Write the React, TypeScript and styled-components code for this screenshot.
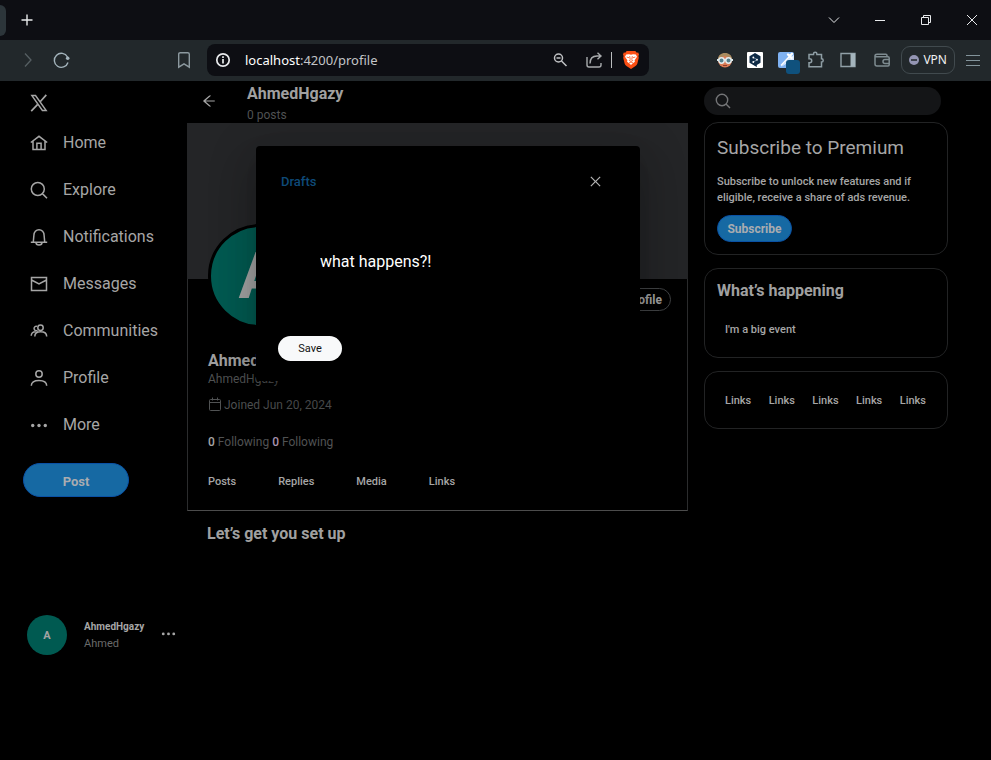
import React from "react";
import styled, { createGlobalStyle } from "styled-components";
import { AiOutlineArrowLeft, AiOutlineClose } from "react-icons/ai";

const GlobalStyle = createGlobalStyle`
  *, *::before, *::after { box-sizing: border-box; }
  html, body { margin: 0; background: #000; }
  body { font-family: Roboto, sans-serif; color: #a6a6a6; }
  button, input { font-family: inherit; margin: 0; }
  h1, h2, p, ul, dl, dd { margin: 0; padding: 0; }
  ul { list-style: none; }
  a { color: inherit; text-decoration: none; }
  svg { display: block; flex: none; overflow: visible; }
`;

const Shell = styled.div`
  display: flex;
  flex-direction: column;
  min-height: 100vh;
`;

/* Browser chrome */

const TabStrip = styled.div`
  display: flex;
  align-items: center;
  justify-content: space-between;
  height: 40px;
  background: #0d0e13;
`;

const TabStart = styled.div`
  display: flex;
  align-items: center;
  gap: 13px;
`;

const TabEdge = styled.div`
  width: 6px;
  height: 31px;
  border-radius: 0 6px 6px 0;
  background: #2c353a;
`;

const WindowControls = styled.div`
  display: flex;
  gap: 8px;
`;

const ChromeButton = styled.button<{ $w: number }>`
  display: flex;
  align-items: center;
  justify-content: center;
  width: ${(p) => p.$w}px;
  height: 32px;
  padding: 0;
  border: 0;
  background: none;
  color: #e8eaec;
`;

const Toolbar = styled.div`
  display: flex;
  align-items: center;
  justify-content: space-between;
  height: 41px;
  padding: 0 3px 1px 12px;
  background: #22282b;
`;

const ToolGroup = styled.div`
  display: flex;
  align-items: center;
`;

const Bookmark = styled(ChromeButton)`
  margin: 0 7px 0 88px;
`;

const AddressBar = styled.div`
  display: flex;
  align-items: center;
  width: 442px;
  height: 32px;
  padding: 0 0 0 8px;
  border-radius: 8px;
  background: #0d0e13;
`;

const Address = styled.div`
  flex: 1;
  padding-left: 14px;
  font: 13px/20px "Noto Sans", sans-serif;
  color: #c3c5c8;

  b {
    font-weight: 400;
    color: #fff;
  }
`;

const AddressRule = styled.div`
  width: 1px;
  height: 16px;
  background: #b9bcbe;
`;

const VpnButton = styled.button`
  display: flex;
  align-items: center;
  gap: 4px;
  height: 28px;
  margin: 0 3px 0 2px;
  padding: 0 7px;
  border: 1px solid #414a4e;
  border-radius: 9px;
  background: none;
  font: 12px/16px "Noto Sans", sans-serif;
  color: #f0f1f2;
`;

/* Page */

const Page = styled.div`
  position: relative;
  flex: 1;
  display: grid;
  grid-template-columns: 187px minmax(0, 1fr) 303px;
  align-items: start;
`;

const Sidebar = styled.nav`
  display: flex;
  flex-direction: column;
  padding: 12px 8px 0 23px;
`;

const Brand = styled.a`
  display: flex;
  height: 26px;
  padding: 1px 7px 0;
`;

const NavLink = styled.a`
  display: flex;
  align-items: center;
  gap: 15px;
  height: 47px;
  padding-left: 7px;
  font-size: 16px;
  line-height: 24px;
`;

const PrimaryButton = styled.button<{ $large?: boolean }>`
  align-self: flex-start;
  width: ${(p) => (p.$large ? 106 : 75)}px;
  height: ${(p) => (p.$large ? 34 : 27)}px;
  padding: 0;
  border: 1px solid #0a51a5;
  border-radius: 17px;
  background: #1669a3;
  font-size: ${(p) => (p.$large ? 13 : 12)}px;
  font-weight: 700;
  color: #a9acb0;
`;

const PostButton = styled(PrimaryButton)`
  margin-top: 15px;
  padding-top: 2px;
`;

const Account = styled.button`
  display: flex;
  align-items: center;
  margin-top: 118px;
  padding: 0 3px 0 4px;
  border: 0;
  background: none;
  text-align: left;
  color: #a6a6a6;
`;

const AccountMore = styled.span`
  padding-bottom: 4px;
`;

const Avatar = styled.span<{ $large?: boolean }>`
  display: flex;
  align-items: center;
  justify-content: center;
  width: ${(p) => (p.$large ? 104 : 40)}px;
  height: ${(p) => (p.$large ? 104 : 40)}px;
  border: ${(p) => (p.$large ? "3px solid #000" : "0")};
  border-radius: 50%;
  background: #005a51;
  font-size: ${(p) => (p.$large ? 64 : 11)}px;
  font-weight: 700;
  color: #a3a3a3;
`;

const AccountNames = styled.span`
  display: flex;
  flex-direction: column;
  flex: 1;
  padding-left: 17px;
  font-size: 11px;
  line-height: 17px;
  color: #6a6a6a;

  strong {
    font-size: 10px;
    color: #a6a6a6;
  }
`;

const Main = styled.main`
  display: flex;
  flex-direction: column;
`;

const ProfileBar = styled.header`
  display: flex;
  align-items: flex-start;
  gap: 30px;
  height: 42px;
  padding: 1px 0 0 14px;
`;

const BackButton = styled.button`
  margin-top: 11px;
  padding: 0;
  border: 0;
  background: none;
  color: #a6a6a6;
`;

const Title = styled.h1`
  font-size: 16px;
  line-height: 24px;
  color: #a0a0a0;
`;

const Muted = styled.p`
  font-size: 12px;
  line-height: 16px;
  color: #515354;
`;

const PostCount = styled(Muted)`
  margin-top: 1px;
`;

const ProfileCard = styled.section`
  border: solid #2b2c2d;
  border-width: 0 1px 1px;
  border-bottom-color: #4c4c4c;
  padding-bottom: 20px;
`;

const Banner = styled.div`
  height: 156px;
  margin: 0 -1px;
  background: #242527;
`;

const AvatarRow = styled.div`
  display: flex;
  align-items: flex-end;
  justify-content: space-between;
  height: 49px;
  padding: 0 16px 0 20px;
`;

const EditButton = styled.button`
  height: 23px;
  margin-bottom: 17px;
  padding: 0 8px;
  border: 1px solid #414345;
  border-radius: 12px;
  background: none;
  font-size: 12px;
  font-weight: 700;
  color: #a0a0a0;
`;

const Details = styled.div`
  padding: 23px 20px 0;
`;

const Name = styled.h2`
  font-size: 16px;
  line-height: 20px;
  color: #a0a0a0;
`;

const Joined = styled(Muted)`
  display: flex;
  align-items: center;
  gap: 3px;
  margin-top: 10px;
`;

const Follows = styled(Muted)`
  margin-top: 21px;

  b {
    font-weight: 500;
    color: #a6a6a6;
  }

  b.second {
    color: #a893ae;
  }
`;

const Tabs = styled.nav`
  display: flex;
  gap: 42px;
  margin-top: 24px;
  font-size: 11px;
  font-weight: 500;
  line-height: 16px;
`;

const Setup = styled.h2`
  padding: 11px 20px;
  font-size: 16px;
  line-height: 24px;
  color: #a0a0a0;
`;

const Aside = styled.aside`
  display: flex;
  flex-direction: column;
  padding: 6px 43px 0 16px;
`;

const Search = styled.label`
  display: flex;
  align-items: center;
  gap: 8px;
  height: 28px;
  margin-right: 7px;
  padding: 0 11px;
  border-radius: 14px;
  background: #141517;
  color: #747577;

  input {
    flex: 1;
    min-width: 0;
    border: 0;
    outline: 0;
    background: none;
    color: #a6a6a6;
  }
`;

const Card = styled.section`
  display: flex;
  flex-direction: column;
  margin-top: 13px;
  padding: 10px 12px 12px;
  border: 1px solid #222324;
  border-radius: 14px;

  ${Search} + & {
    margin-top: 7px;
  }
`;

const PremiumTitle = styled.h2`
  font-size: 19px;
  font-weight: 400;
  line-height: 30px;
`;

const CardTitle = styled.h2`
  font-size: 16px;
  line-height: 24px;
  color: #a0a0a0;
`;

const CardText = styled.p`
  margin: 11px 0 9px;
  font-size: 11px;
  font-weight: 500;
  line-height: 16px;
`;

const EventText = styled.p`
  padding: 19px 8px 7px;
  font-size: 11px;
  font-weight: 500;
  line-height: 16px;
`;

const LinkList = styled.ul`
  display: flex;
  justify-content: space-between;
  padding: 11px 9px 7px 8px;
  font-size: 11px;
  font-weight: 500;
  line-height: 16px;
`;

/* Dialog */

const Overlay = styled.div`
  position: absolute;
  inset: 0;
  display: flex;
  align-items: flex-start;
  justify-content: center;
  padding: 65px 95px 0 0;
`;

const Dialog = styled.form`
  display: flex;
  flex-direction: column;
  width: 384px;
  padding: 23px 22px 20px;
  border-radius: 4px;
  background: #000;
  box-shadow: 0 11px 15px -7px rgba(0, 0, 0, 0.2),
    0 24px 38px 3px rgba(0, 0, 0, 0.14), 0 9px 46px 8px rgba(0, 0, 0, 0.12);
`;

const DialogHead = styled.div`
  display: flex;
  align-items: center;
  justify-content: space-between;
  height: 24px;
  padding: 0 15px 0 3px;
`;

const PlainButton = styled.button`
  padding: 0;
  border: 0;
  background: none;
  font-size: 13px;
  font-weight: 500;
  color: #0e4a78;
`;

const CloseButton = styled(PlainButton)`
  color: #b4b4b4;
`;

const PostField = styled.textarea`
  height: 90px;
  margin: 53px 42px 0;
  padding: 2px 0 0;
  border: 0;
  outline: 0;
  resize: none;
  background: none;
  font: 16px/28px Roboto, sans-serif;
  color: #fff;
`;

const SaveButton = styled.button`
  align-self: flex-start;
  width: 64px;
  height: 25px;
  padding: 0;
  border: 0;
  border-radius: 13px;
  background: #f8f9fa;
  font-size: 11px;
  color: #111;
`;

const Stroke = ({
  size = 16,
  width = 1,
  color = "currentColor",
  children,
}: {
  size?: number;
  width?: number;
  color?: string;
  children: React.ReactNode;
}) => (
  <svg
    width={size}
    height={size}
    viewBox={`0 0 ${size} ${size}`}
    fill="none"
    stroke={color}
    strokeWidth={width}
    aria-hidden="true"
  >
    {children}
  </svg>
);

const XLogo = () => (
  <svg width="18" height="18" viewBox="0 0 18 18" fill="none" stroke="#a6a6a6" strokeWidth="1.500" aria-hidden="true">
    <path d="M1.900 1.600h3.600l10.600 14.800h-3.700z" />
    <path d="M16.300.9 10.200 7.800M7.700 10.400 1.200 17.200" strokeWidth="1.700" />
  </svg>
);

const BraveLogo = () => (
  <svg width="16" height="18" viewBox="0 0 16 18" aria-hidden="true">
    <path fill="#fb4f14" d="m3.700 0h8.600l1.500 1.700 1.400-.1.800 2-.6 1.500.4 1.600-1.500 6c-.3 1-1 1.800-1.800 2.400L8 18l-4.500-2.900c-.8-.6-1.500-1.400-1.800-2.400l-1.500-6 .4-1.600L0 3.600l.8-2 1.400.1z" />
    <path fill="#fff" d="M3.200 3.500 6 3.200l2 .5 2-.5 2.800.3 1.200 2.300-2.400 3.500.3 1.500-2.300 1.600L8 14l-1.600-1.600-2.300-1.600.3-1.500L2 5.800z" />
    <path fill="none" stroke="#fb4f14" strokeWidth=".8" d="m3.600 6 2.600.8M12.400 6l-2.600.8M6.700 5.100l.5 3.300-1 1.100L8 10.400l1.800-.9-1-1.100.5-3.300M6 12l2-1 2 1" />
  </svg>
);

const FaceIcon = () => (
  <svg width="16" height="16" viewBox="0 0 16 16" aria-hidden="true">
    <circle cx="8" cy="8.500" r="7" fill="#d97b55" />
    <path d="M1 8C1 3 4 1 8 1s7 2 7 7l-3-3-5-1-4 2z" fill="#a98c60" />
    <path d="M0 7h16v2H0z" fill="#d9e6e8" />
    <circle cx="4.500" cy="8.500" r="2.700" fill="#557f8b" stroke="#e5eef0" strokeWidth="1.400" />
    <circle cx="11.500" cy="8.500" r="2.700" fill="#557f8b" stroke="#e5eef0" strokeWidth="1.400" />
    <path d="M6 13.500h4" stroke="#8f3d2c" />
  </svg>
);

const HexIcon = () => (
  <svg width="16" height="16" viewBox="0 0 16 16" aria-hidden="true">
    <rect width="16" height="16" rx="1" fill="#fff" />
    <path d="m8 1 5.500 3.200v6.600L9.800 13v2L8 14l-5.500-3.200V4.200z" fill="#0f2b46" />
    <path d="m6.300 5.500 4 2.200-4 2.300" fill="none" stroke="#9fb1c4" strokeWidth=".7" />
    <circle cx="6.300" cy="5.500" r=".9" fill="#fff" />
    <circle cx="10" cy="7.700" r=".9" fill="#fff" />
    <circle cx="6.300" cy="10" r=".9" fill="#fff" />
  </svg>
);

const PickerIcon = () => (
  <svg width="16" height="16" viewBox="0 0 16 16" aria-hidden="true">
    <rect width="16" height="16" rx="2" fill="#7fb2f2" />
    <path d="M16 3v5l-5 2-8 5 8-9z" fill="#d6e8ff" />
    <path d="M3 13.500 11 5" stroke="#fff" strokeWidth="1.600" />
    <path d="m10 2.500 3.500 3.500M11.500 4.500l2.500-2.700" stroke="#fff" strokeWidth="2.400" strokeLinecap="round" />
    <rect x="8" y="8" width="14" height="14" rx="3" fill="#0f517d" />
  </svg>
);

const navItems = [
  {
    label: "Home",
    icon: <path d="M.8 8.500 9 2.300 17.200 8.500M3 7.300v8.300h12V7.300M6.900 15.500V9.300h4.200v6.200" />,
  },
  {
    label: "Explore",
    icon: <path d="M14.300 8a6.500 6.500 0 1 1-13 0 6.500 6.500 0 0 1 13 0zM12.400 12.600l4.600 4.600" />,
  },
  {
    label: "Notifications",
    icon: <path d="M.8 14.200h16.400M3.300 14l.6-6.700a5.100 5.600 0 0 1 10.200 0l.6 6.700M6 14.500a3 2.500 0 0 0 6 0" />,
  },
  {
    label: "Messages",
    icon: <path d="M1.500 2.500h15v13h-15zM1.500 5l7.500 4 7.500-4" />,
  },
  {
    label: "Communities",
    icon: (
      <path d="M13.200 5.700a2.700 2.700 0 1 1-5.400 0 2.700 2.700 0 0 1 5.400 0zM4.800 14.500q0-4.700 5.900-4.700t6 4.700M7.500 8.300a2.200 2.200 0 1 1-.5-3.900M1.200 13.700q.3-4 4.300-4" />
    ),
  },
  {
    label: "Profile",
    icon: <path d="M12.200 5a3.200 3.200 0 1 1-6.400 0 3.200 3.200 0 0 1 6.400 0zM1.300 16.800q0-5.300 7.700-5.300t7.700 5.300" />,
  },
];

const Dots = ({ size = 18 }: { size?: number }) => (
  <svg width={size} height={size} viewBox="0 0 18 18" fill="currentColor" aria-hidden="true">
    <circle cx="2.700" cy="9.500" r="1.700" />
    <circle cx="9" cy="9.500" r="1.700" />
    <circle cx="15.300" cy="9.500" r="1.700" />
  </svg>
);

const BrowserChrome = () => (
  <header>
    <TabStrip>
      <TabStart>
        <TabEdge />
        <ChromeButton $w={16} aria-label="New tab">
          <Stroke size={12}><path d="M6 .5v11M.5 6h11" strokeWidth="1.400" /></Stroke>
        </ChromeButton>
      </TabStart>
      <WindowControls>
        <ChromeButton $w={38} aria-label="Search tabs">
          <Stroke size={12}><path d="m1 3.500 5 5 5-5" /></Stroke>
        </ChromeButton>
        <ChromeButton $w={38} aria-label="Minimize">
          <Stroke size={10}><path d="M0 5.500h10" /></Stroke>
        </ChromeButton>
        <ChromeButton $w={38} aria-label="Restore">
          <Stroke size={10}><path d="M.5 2.500h7v7h-7zM2.500 2.500v-2h7v7h-2" /></Stroke>
        </ChromeButton>
        <ChromeButton $w={38} aria-label="Close window">
          <Stroke size={10}><path d="m0 0 10 10M10 0 0 10" /></Stroke>
        </ChromeButton>
      </WindowControls>
    </TabStrip>
    <Toolbar>
      <ToolGroup>
        <ChromeButton $w={32} aria-label="Forward">
          <Stroke color="#565f63" width={1.3}><path d="m5 1.500 6 6.500-6 6.500" /></Stroke>
        </ChromeButton>
        <ChromeButton $w={36} aria-label="Reload">
          <Stroke color="#a4b4bc" width={1.4}>
            <path d="M14 10.500A7 7 0 1 1 13.500 5" />
            <circle cx="13.700" cy="6.300" r="1.800" fill="#a4b4bc" stroke="none" />
          </Stroke>
        </ChromeButton>
        <Bookmark $w={32} aria-label="Bookmark">
          <Stroke color="#8c999f" width={1.4}><path d="M2.700 2.200q0-1.500 1.500-1.500h7.600q1.500 0 1.500 1.500v13L8 11.800l-5.300 3.400z" /></Stroke>
        </Bookmark>
        <AddressBar>
          <Stroke color="#e8eaec" width={1.7}>
            <circle cx="8" cy="8" r="6.200" />
            <path d="M8 7v4.500M8 4.300v1.600" />
          </Stroke>
          <Address><b>localhost</b>:4200/profile</Address>
          <ChromeButton $w={34} aria-label="Zoom">
            <Stroke size={14} color="#bfc1c3" width={1.5}>
              <circle cx="5.500" cy="5" r="4" />
              <path d="m8.500 8 5 5M3.500 5h4" />
            </Stroke>
          </ChromeButton>
          <ChromeButton $w={34} aria-label="Share">
            <Stroke color="#a8abad" width={1.4}>
              <path d="M1 5v8q0 2 2 2h10q2 0 2-2v-2M4 11.500c0-5 3-7.500 7-7.500h4M11.500.8 15 4l-3.500 3.300" />
            </Stroke>
          </ChromeButton>
          <AddressRule />
          <ChromeButton $w={37} aria-label="Brave Shields"><BraveLogo /></ChromeButton>
        </AddressBar>
      </ToolGroup>
      <ToolGroup>
        <ChromeButton $w={30} aria-label="Goggles extension"><FaceIcon /></ChromeButton>
        <ChromeButton $w={30} aria-label="Translator extension"><HexIcon /></ChromeButton>
        <ChromeButton $w={31} aria-label="Picker extension"><PickerIcon /></ChromeButton>
        <ChromeButton $w={30} aria-label="Extensions">
          <Stroke color="#8f9ea5" width={1.5}>
            <path d="M1 2.500h4.500V2a1.700 1.700 0 0 1 3.400 0v.5H13.500v4.200a1.700 1.700 0 0 1 0 3.400v4.600H1v-4h.7a2 2 0 0 0 0-4H1z" />
          </Stroke>
        </ChromeButton>
        <ChromeButton $w={33} aria-label="Side panel">
          <Stroke color="#91a0a7" width={1.4}>
            <path d="M1 1.500h14v13H1z" />
            <path d="M10.500 1.500H15v13h-4.500z" fill="#a4b4bc" stroke="none" />
          </Stroke>
        </ChromeButton>
        <ChromeButton $w={35} aria-label="Wallet">
          <Stroke color="#7e8b90" width={1.5}>
            <path d="M13 4.500V3.500q0-1.200-1.200-1.200H3Q1 2.300 1 3.500v8.500Q1 14 3 14h11q1.200 0 1.200-1.200V6q0-1.300-1.200-1.300H2.500Q1 4.700 1 3.500" />
            <path d="M15 7.400H11a2 2 0 0 0 0 4h4" />
          </Stroke>
        </ChromeButton>
        <VpnButton>
          <Stroke size={10}><circle cx="5" cy="5" r="5" fill="#9495b3" stroke="none" /><path d="M2 5h6" stroke="#22282b" strokeWidth="1.500" /></Stroke>
          VPN
        </VpnButton>
        <ChromeButton $w={30} aria-label="Menu">
          <Stroke color="#83949b" size={14} width={1.2}><path d="M0 2.500h14M0 7.500h14M0 12.500h14" /></Stroke>
        </ChromeButton>
      </ToolGroup>
    </Toolbar>
  </header>
);

export default function App() {
  return (
    <Shell>
      <GlobalStyle />
      <BrowserChrome />
      <Page>
        <Sidebar aria-label="Primary">
          <Brand href="#" aria-label="X"><XLogo /></Brand>
          {navItems.map(({ label, icon }) => (
            <NavLink href="#" key={label}>
              <Stroke size={18} width={1.5}>{icon}</Stroke>
              {label}
            </NavLink>
          ))}
          <NavLink href="#">
            <Dots />
            More
          </NavLink>
          <PostButton $large>Post</PostButton>
          <Account>
            <Avatar>A</Avatar>
            <AccountNames>
              <strong>AhmedHgazy</strong>
              Ahmed
            </AccountNames>
            <AccountMore><Dots size={15} /></AccountMore>
          </Account>
        </Sidebar>

        <Main>
          <ProfileBar>
            <BackButton aria-label="Back"><AiOutlineArrowLeft size={16} /></BackButton>
            <div>
              <Title>AhmedHgazy</Title>
              <PostCount>0 posts</PostCount>
            </div>
          </ProfileBar>
          <ProfileCard>
            <Banner />
            <AvatarRow>
              <Avatar $large>A</Avatar>
              <EditButton>Edit profile</EditButton>
            </AvatarRow>
            <Details>
              <Name>AhmedHgazy</Name>
              <Muted>AhmedHgazy</Muted>
              <Joined>
                <Stroke size={13}>
                  <rect x="1.500" y=".5" width="11" height="11" rx="1" />
                  <path d="M1.500 3.500h11M4.500-1.500v3M9.500-1.500v3" />
                </Stroke>
                Joined Jun 20, 2024
              </Joined>
              <Follows>
                <b>0</b> Following <b className="second">0</b> Following
              </Follows>
              <Tabs aria-label="Profile sections">
                <a href="#">Posts</a>
                <a href="#">Replies</a>
                <a href="#">Media</a>
                <a href="#">Links</a>
              </Tabs>
            </Details>
          </ProfileCard>
          <Setup>Let’s get you set up</Setup>
        </Main>

        <Aside>
          <Search>
            <Stroke width={1.4}>
              <circle cx="7" cy="7" r="5.700" />
              <path d="m11 11 4 4" />
            </Stroke>
            <input type="search" aria-label="Search" />
          </Search>
          <Card>
            <PremiumTitle>Subscribe to Premium</PremiumTitle>
            <CardText>Subscribe to unlock new features and if eligible, receive a share of ads revenue.</CardText>
            <PrimaryButton>Subscribe</PrimaryButton>
          </Card>
          <Card>
            <CardTitle>What’s happening</CardTitle>
            <EventText>I'm a big event</EventText>
          </Card>
          <Card>
            <LinkList>
              {[1, 2, 3, 4, 5].map((n) => (
                <li key={n}><a href="#">Links</a></li>
              ))}
            </LinkList>
          </Card>
        </Aside>

        <Overlay>
          <Dialog role="dialog" aria-label="New post">
            <DialogHead>
              <PlainButton type="button">Drafts</PlainButton>
              <CloseButton type="button" aria-label="Close"><AiOutlineClose size={15} /></CloseButton>
            </DialogHead>
            <PostField aria-label="Post text" defaultValue="what happens?!" />
            <SaveButton type="button">Save</SaveButton>
          </Dialog>
        </Overlay>
      </Page>
    </Shell>
  );
}
